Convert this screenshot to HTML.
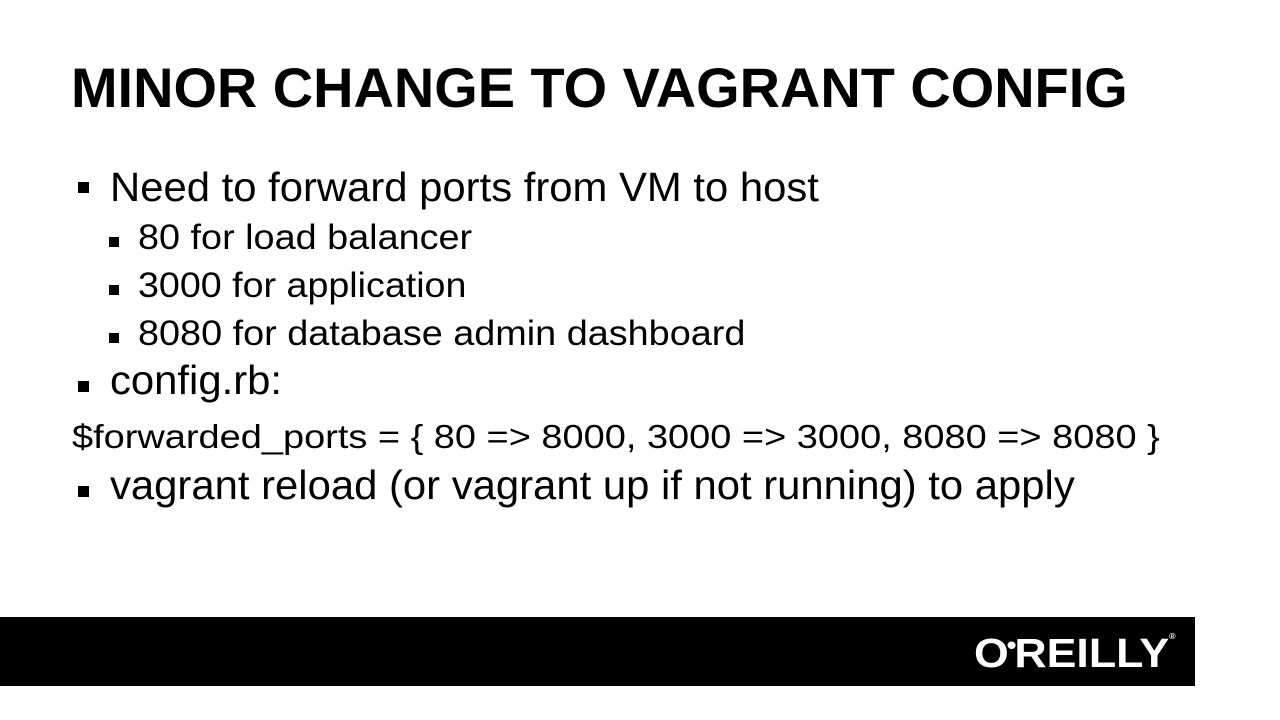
<!DOCTYPE html>
<html><head><meta charset="utf-8"><style>
body{margin:0;width:1280px;height:720px;background:#fff;position:relative;overflow:hidden;font-family:"Liberation Sans",Arial,sans-serif;color:#000}
.t{position:absolute;line-height:1;white-space:nowrap;transform-origin:0 0}
.b{position:absolute;background:#000}
</style></head><body>
<div class="t" style="left:71px;top:60px;font-size:56px;font-weight:bold;transform:scaleX(0.998)">MINOR CHANGE TO VAGRANT CONFIG</div>
<div class="b" style="left:78px;top:182px;width:11px;height:11px"></div>
<div class="t" style="left:110px;top:167px;font-size:41px;transform:scaleX(1.02)">Need to forward ports from VM to host</div>
<div class="b" style="left:109px;top:237px;width:10px;height:10px"></div>
<div class="t" style="left:138px;top:220px;font-size:35px;transform:scaleX(1.08)">80 for load balancer</div>
<div class="b" style="left:109px;top:285px;width:10px;height:10px"></div>
<div class="t" style="left:138px;top:268px;font-size:35px;transform:scaleX(1.075)">3000 for application</div>
<div class="b" style="left:109px;top:333px;width:10px;height:10px"></div>
<div class="t" style="left:138px;top:316px;font-size:35px;transform:scaleX(1.08)">8080 for database admin dashboard</div>
<div class="b" style="left:78px;top:381px;width:11px;height:11px"></div>
<div class="t" style="left:110px;top:360px;font-size:41px;transform:scaleX(1.02)">config.rb:</div>
<div class="t" style="left:72px;top:420px;font-size:33px;transform:scaleX(1.15)">$forwarded_ports = { 80 =&gt; 8000, 3000 =&gt; 3000, 8080 =&gt; 8080 }</div>
<div class="b" style="left:78px;top:486px;width:11px;height:11px"></div>
<div class="t" style="left:110px;top:465px;font-size:41px;transform:scaleX(1.02)">vagrant reload (or vagrant up if not running) to apply</div>
<div class="b" style="left:0;top:617px;width:1195px;height:69px"></div>
<div class="t" style="left:974px;top:632px;font-size:41px;font-weight:bold;color:#fff;transform:scaleX(1.09)">O<span style="font-size:26px;vertical-align:13px;margin:0 -2px">•</span>REILLY<span style="font-size:8px;vertical-align:28px">®</span></div>
</body></html>
